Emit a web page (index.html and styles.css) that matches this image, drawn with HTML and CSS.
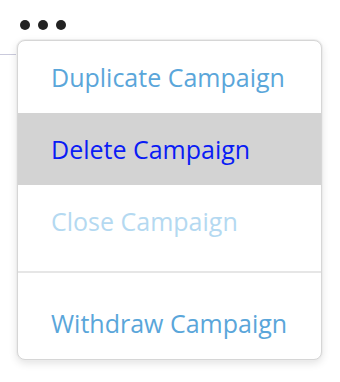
FILE: index.html
```html
<!DOCTYPE html>
<html>
<head>
<meta charset="utf-8">
<link rel="stylesheet" href="styles.css">
</head>
<body>
<div class="page">
  <div class="toolbar">
    <span class="dot"></span><span class="dot"></span><span class="dot"></span>
  </div>
  <div class="rule"></div>
  <div class="menu">
    <div class="item">Duplicate Campaign</div>
    <div class="item active">Delete Campaign</div>
    <div class="item disabled">Close Campaign</div>
    <div class="divider"></div>
    <div class="item">Withdraw Campaign</div>
  </div>
</div>
</body>
</html>
```
FILE: styles.css
```css
html, body {
  margin: 0;
  padding: 0;
  background: #ffffff;
}
.page {
  position: relative;
  width: 340px;
  height: 382px;
  font-family: "Open Sans", "Liberation Sans", sans-serif;
}
.toolbar {
  display: flex;
  gap: 8px;
  padding: 20px 0 0 20px;
}
.dot {
  width: 10px;
  height: 10px;
  border-radius: 50%;
  background: #222222;
}
.rule {
  margin-top: 24px;
  width: 120px;
  height: 1px;
  background: #cacadc;
}
.menu {
  position: absolute;
  top: 40px;
  left: 17px;
  width: 303px;
  background: #ffffff;
  border: 1px solid #d6d6d6;
  border-radius: 8px;
  box-shadow: 0 0 0 1px #ececec, 0 3px 8px rgba(0, 0, 0, 0.12);
  overflow: hidden;
}
.item {
  height: 72px;
  display: flex;
  align-items: center;
  padding-left: 33px;
  font-size: 25px;
  font-weight: 500;
  color: #5aa6da;
}
.item.active {
  background: #d3d3d3;
  color: #0a1cf5;
}
.item.disabled {
  color: #b4d9f1;
}
.divider {
  height: 2px;
  margin: 14px 0;
  background: #e6e6e6;
}
```
